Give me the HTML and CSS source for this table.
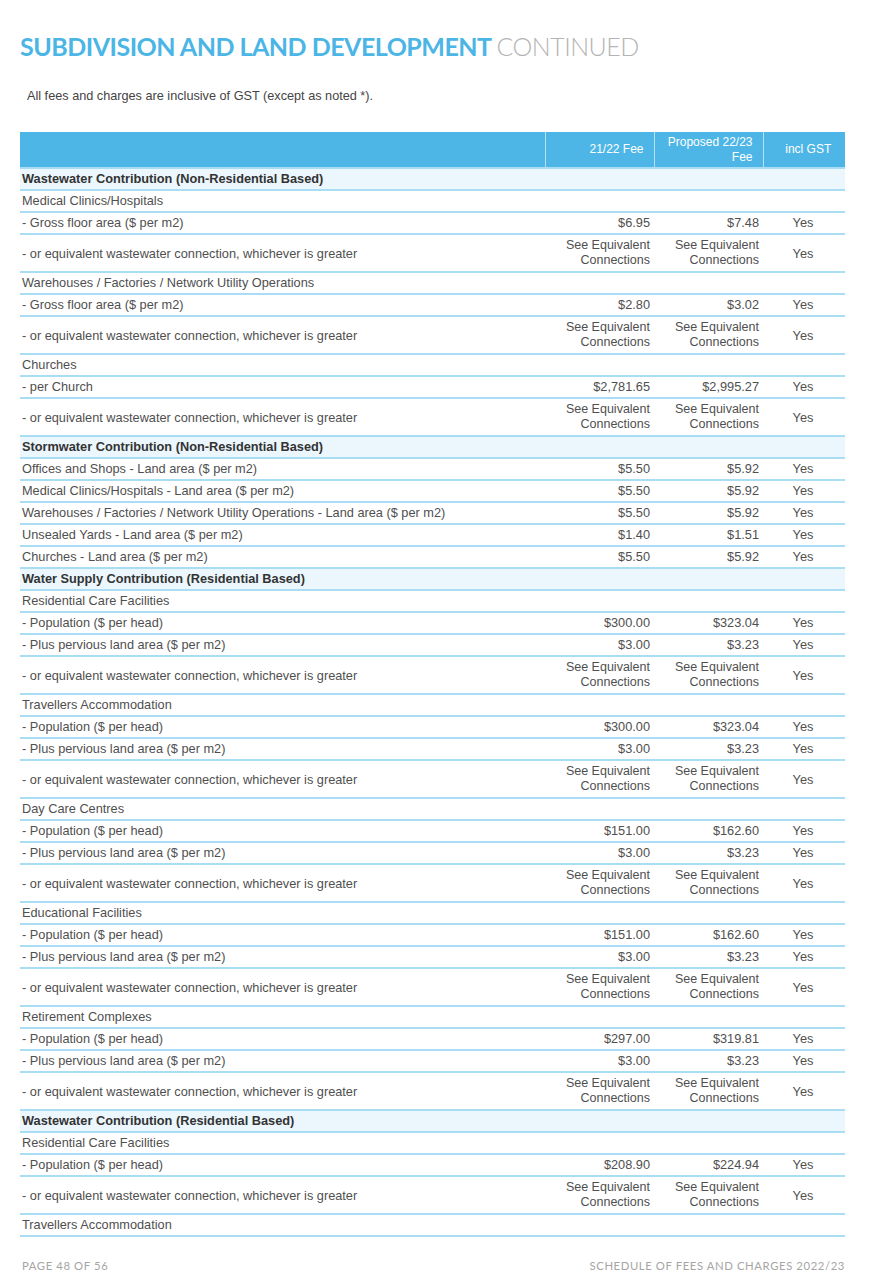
FILE: index.html
```html
<!DOCTYPE html>
<html lang="en">
<head>
    <meta charset="UTF-8">
    <meta name="viewport" content="width=device-width, initial-scale=1.0">
    <title>Subdivision and Land Development - Schedule of Fees</title>
    <link rel="stylesheet" href="styles.css">
</head>
<body>
    <div class="page">
        <h1><span class="strong">SUBDIVISION AND LAND DEVELOPMENT</span> <span class="light">CONTINUED</span></h1>
        <p class="note">All fees and charges are inclusive of GST (except as noted *).</p>

        <table class="fees">
            <colgroup>
                <col class="c-desc">
                <col class="c-fee">
                <col class="c-fee">
                <col class="c-gst">
            </colgroup>
            <thead>
                <tr>
                    <th></th>
                    <th class="num">21/22 Fee</th>
                    <th class="num">Proposed 22/23<br>Fee</th>
                    <th class="gst">incl GST</th>
                </tr>
            </thead>
            <tbody>
                <tr class="section"><td colspan="4">Wastewater Contribution (Non-Residential Based)</td></tr>
                <tr><td colspan="4">Medical Clinics/Hospitals</td></tr>
                <tr><td>- Gross floor area ($ per m2)</td><td class="num">$6.95</td><td class="num">$7.48</td><td class="gst">Yes</td></tr>
                <tr class="eq"><td>- or equivalent wastewater connection, whichever is greater</td><td class="num">See Equivalent<br>Connections</td><td class="num">See Equivalent<br>Connections</td><td class="gst">Yes</td></tr>
                <tr><td colspan="4">Warehouses / Factories / Network Utility Operations</td></tr>
                <tr><td>- Gross floor area ($ per m2)</td><td class="num">$2.80</td><td class="num">$3.02</td><td class="gst">Yes</td></tr>
                <tr class="eq"><td>- or equivalent wastewater connection, whichever is greater</td><td class="num">See Equivalent<br>Connections</td><td class="num">See Equivalent<br>Connections</td><td class="gst">Yes</td></tr>
                <tr><td colspan="4">Churches</td></tr>
                <tr><td>- per Church</td><td class="num">$2,781.65</td><td class="num">$2,995.27</td><td class="gst">Yes</td></tr>
                <tr class="eq"><td>- or equivalent wastewater connection, whichever is greater</td><td class="num">See Equivalent<br>Connections</td><td class="num">See Equivalent<br>Connections</td><td class="gst">Yes</td></tr>

                <tr class="section"><td colspan="4">Stormwater Contribution (Non-Residential Based)</td></tr>
                <tr><td>Offices and Shops - Land area ($ per m2)</td><td class="num">$5.50</td><td class="num">$5.92</td><td class="gst">Yes</td></tr>
                <tr><td>Medical Clinics/Hospitals - Land area ($ per m2)</td><td class="num">$5.50</td><td class="num">$5.92</td><td class="gst">Yes</td></tr>
                <tr><td>Warehouses / Factories / Network Utility Operations - Land area ($ per m2)</td><td class="num">$5.50</td><td class="num">$5.92</td><td class="gst">Yes</td></tr>
                <tr><td>Unsealed Yards - Land area ($ per m2)</td><td class="num">$1.40</td><td class="num">$1.51</td><td class="gst">Yes</td></tr>
                <tr><td>Churches - Land area ($ per m2)</td><td class="num">$5.50</td><td class="num">$5.92</td><td class="gst">Yes</td></tr>

                <tr class="section"><td colspan="4">Water Supply Contribution (Residential Based)</td></tr>
                <tr><td colspan="4">Residential Care Facilities</td></tr>
                <tr><td>- Population ($ per head)</td><td class="num">$300.00</td><td class="num">$323.04</td><td class="gst">Yes</td></tr>
                <tr><td>- Plus pervious land area ($ per m2)</td><td class="num">$3.00</td><td class="num">$3.23</td><td class="gst">Yes</td></tr>
                <tr class="eq"><td>- or equivalent wastewater connection, whichever is greater</td><td class="num">See Equivalent<br>Connections</td><td class="num">See Equivalent<br>Connections</td><td class="gst">Yes</td></tr>
                <tr><td colspan="4">Travellers Accommodation</td></tr>
                <tr><td>- Population ($ per head)</td><td class="num">$300.00</td><td class="num">$323.04</td><td class="gst">Yes</td></tr>
                <tr><td>- Plus pervious land area ($ per m2)</td><td class="num">$3.00</td><td class="num">$3.23</td><td class="gst">Yes</td></tr>
                <tr class="eq"><td>- or equivalent wastewater connection, whichever is greater</td><td class="num">See Equivalent<br>Connections</td><td class="num">See Equivalent<br>Connections</td><td class="gst">Yes</td></tr>
                <tr><td colspan="4">Day Care Centres</td></tr>
                <tr><td>- Population ($ per head)</td><td class="num">$151.00</td><td class="num">$162.60</td><td class="gst">Yes</td></tr>
                <tr><td>- Plus pervious land area ($ per m2)</td><td class="num">$3.00</td><td class="num">$3.23</td><td class="gst">Yes</td></tr>
                <tr class="eq"><td>- or equivalent wastewater connection, whichever is greater</td><td class="num">See Equivalent<br>Connections</td><td class="num">See Equivalent<br>Connections</td><td class="gst">Yes</td></tr>
                <tr><td colspan="4">Educational Facilities</td></tr>
                <tr><td>- Population ($ per head)</td><td class="num">$151.00</td><td class="num">$162.60</td><td class="gst">Yes</td></tr>
                <tr><td>- Plus pervious land area ($ per m2)</td><td class="num">$3.00</td><td class="num">$3.23</td><td class="gst">Yes</td></tr>
                <tr class="eq"><td>- or equivalent wastewater connection, whichever is greater</td><td class="num">See Equivalent<br>Connections</td><td class="num">See Equivalent<br>Connections</td><td class="gst">Yes</td></tr>
                <tr><td colspan="4">Retirement Complexes</td></tr>
                <tr><td>- Population ($ per head)</td><td class="num">$297.00</td><td class="num">$319.81</td><td class="gst">Yes</td></tr>
                <tr><td>- Plus pervious land area ($ per m2)</td><td class="num">$3.00</td><td class="num">$3.23</td><td class="gst">Yes</td></tr>
                <tr class="eq"><td>- or equivalent wastewater connection, whichever is greater</td><td class="num">See Equivalent<br>Connections</td><td class="num">See Equivalent<br>Connections</td><td class="gst">Yes</td></tr>

                <tr class="section"><td colspan="4">Wastewater Contribution (Residential Based)</td></tr>
                <tr><td colspan="4">Residential Care Facilities</td></tr>
                <tr><td>- Population ($ per head)</td><td class="num">$208.90</td><td class="num">$224.94</td><td class="gst">Yes</td></tr>
                <tr class="eq"><td>- or equivalent wastewater connection, whichever is greater</td><td class="num">See Equivalent<br>Connections</td><td class="num">See Equivalent<br>Connections</td><td class="gst">Yes</td></tr>
                <tr><td colspan="4">Travellers Accommodation</td></tr>
            </tbody>
        </table>

        <div class="footer">
            <span>PAGE 48 OF 56</span>
            <span>SCHEDULE OF FEES AND CHARGES 2022/23</span>
        </div>
    </div>
</body>
</html>
```

FILE: styles.css
```css
body {
    margin: 0;
    padding: 0;
    background: #fff;
    font-family: "Liberation Sans", Arial, sans-serif;
    color: #4f4f4f;
}
.page {
    width: 825px;
    padding: 0 34px 0 20px;
}
h1 {
    margin: 0;
    padding-top: 31px;
    font-family: Lato, "Open Sans", sans-serif;
    font-size: 25px;
    line-height: 30px;
    letter-spacing: -0.5px;
    white-space: nowrap;
}
h1 .strong {
    font-weight: 700;
    color: #4bb5e6;
}
h1 .light {
    font-weight: 300;
    color: #b4b4b4;
}
.note {
    margin: 0;
    padding: 27px 0 0 7px;
    font-size: 12.7px;
    line-height: 16px;
    color: #444;
}
.fees {
    width: 825px;
    margin-top: 28px;
    border-collapse: collapse;
    table-layout: fixed;
    font-size: 12.75px;
}
.c-desc { width: 525px; }
.c-fee { width: 109px; }
.c-gst { width: 82px; }
.fees th {
    height: 35px;
    padding: 0 10px 0 4px;
    background: #4db6e6;
    color: #fff;
    font-weight: normal;
    font-size: 12px;
    line-height: 15px;
    vertical-align: middle;
    border-left: 1px solid #b5e1f5;
    border-bottom: 2px solid #a6dcf4;
}
.fees th:first-child {
    border-left: none;
}
.fees td {
    height: 20px;
    padding: 0 4px 0 2px;
    line-height: 18px;
    vertical-align: middle;
    border-bottom: 2px solid #a9ddf4;
    white-space: nowrap;
}
.fees .num {
    text-align: right;
}
.fees td.num {
    padding-right: 4px;
}
.fees .gst {
    text-align: center;
}
.fees th.gst {
    padding: 0 0 0 8px;
}
.fees tr.eq td {
    height: 36px;
    line-height: 15px;
}
.fees tr.section td {
    background: #ebf6fd;
    font-weight: bold;
    color: #333;
}
.fees tr.eq td.num {
    font-size: 12.5px;
}
.footer {
    display: flex;
    justify-content: space-between;
    margin-top: 22px;
    padding-left: 2px;
    font-family: Lato, "Open Sans", sans-serif;
    font-size: 11.3px;
    letter-spacing: 0.6px;
    color: #a5a5a5;
}
```
